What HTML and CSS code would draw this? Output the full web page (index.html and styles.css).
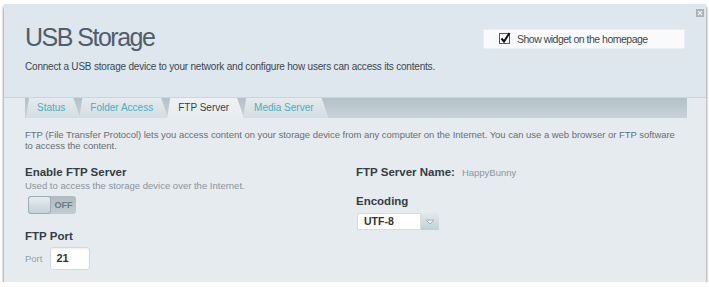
FILE: index.html
```html
<!DOCTYPE html>
<html lang="en">

<head>
    <meta charset="UTF-8">
    <meta name="viewport" content="width=device-width, initial-scale=1.0">
    <title>USB Storage</title>
    <link rel="stylesheet" href="styles.css">
</head>

<body>
    <div class="panel">
        <button class="close" title="Close">
            <svg width="8" height="8" viewBox="0 0 8 8">
                <rect width="8" height="8" fill="#a9b2b8"/>
                <path d="M2 2 L6 6 M6 2 L2 6" stroke="#eef2f4" stroke-width="1.3"/>
            </svg>
        </button>

        <div class="header">
            <div>
                <h1>USB Storage</h1>
                <p class="intro">Connect a USB storage device to your network and configure how users can access its contents.</p>
            </div>
            <label class="widget-option">
                <svg class="check" width="12" height="12" viewBox="0 0 12 12">
                    <rect x="0.5" y="1.5" width="10" height="10" fill="#fff" stroke="#555b60"/>
                    <path d="M2.5 6.5 L5 9.5 L10.5 1" fill="none" stroke="#111" stroke-width="2"/>
                </svg>
                Show widget on the homepage
            </label>
        </div>

        <div class="content">
            <div class="tabs">
                <a class="tab">Status</a>
                <a class="tab">Folder Access</a>
                <a class="tab active">FTP Server</a>
                <a class="tab">Media Server</a>
            </div>

            <p class="desc">FTP (File Transfer Protocol) lets you access content on your storage device from any computer on the Internet. You can use a web browser or FTP software to access the content.</p>

            <div class="columns">
                <div class="col">
                    <h3>Enable FTP Server</h3>
                    <p class="hint">Used to access the storage device over the Internet.</p>
                    <div class="toggle">
                        <span class="knob"></span>
                        <span class="toggle-label">OFF</span>
                    </div>

                    <h3 class="port-title">FTP Port</h3>
                    <div class="port-row">
                        <span class="field-label">Port</span>
                        <span class="text-box">21</span>
                    </div>
                </div>

                <div class="col">
                    <div class="name-row">
                        <h3>FTP Server Name:</h3>
                        <span class="value">HappyBunny</span>
                    </div>

                    <h3 class="encoding-title">Encoding</h3>
                    <div class="select">
                        <span class="select-value">UTF-8</span>
                        <span class="select-button">
                            <svg width="10" height="6" viewBox="0 0 10 6">
                                <path d="M1 1 L5 5 L9 1 Z" fill="#eef3f5" stroke="#9fb2bb"/>
                            </svg>
                        </span>
                    </div>
                </div>
            </div>
        </div>
    </div>
</body>

</html>
```

FILE: styles.css
```css
body {
    margin: 0;
    background-color: #fff;
    font-family: "Liberation Sans", Arial, sans-serif;
}

.panel {
    position: relative;
    width: 702px;
    height: 278px;
    margin: 4px 0 0 4px;
    background-color: #e6ebef;
    box-shadow: 0 3px 3px rgba(0, 0, 0, 0.65);
}

.close {
    position: absolute;
    top: 5px;
    right: 2px;
    padding: 0;
    border: none;
    background: none;
    line-height: 0;
    cursor: pointer;
}

.header {
    display: flex;
    justify-content: space-between;
    height: 72px;
    padding: 21px 21px 0 21px;
    background-color: #dee6ee;
    border-bottom: 1px solid #cbd5db;
}

h1 {
    margin: 0;
    font-size: 25px;
    line-height: 25px;
    font-weight: normal;
    color: #4f5e69;
    letter-spacing: -1.5px;
}

.intro {
    margin: 11px 0 0;
    font-size: 10px;
    line-height: 12px;
    color: #3b464f;
    letter-spacing: -0.2px;
}

.widget-option {
    display: flex;
    align-items: center;
    gap: 6px;
    box-sizing: border-box;
    width: 202px;
    height: 20px;
    margin-top: 4px;
    padding-left: 15px;
    background-color: #f8fafb;
    border: 1px solid #e9eef2;
    font-size: 10.5px;
    color: #3f474d;
    letter-spacing: -0.5px;
}

.check {
    margin-top: -2px;
}

.content {
    padding: 0 19px 0 21px;
}

.tabs {
    display: flex;
    height: 20px;
    background: linear-gradient(#b3c1c8, #c8d3d8);
    padding-left: 1px;
}

.tab {
    padding: 0 15px 0 11px;
    margin-right: -1px;
    font-size: 10px;
    line-height: 20px;
    color: #45afc6;
    background: linear-gradient(#e5ebee, #d4dde2);
    clip-path: polygon(3px 0, calc(100% - 7px) 0, 100% 100%, 0 100%);
    cursor: pointer;
}

.tab.active {
    color: #3a3f43;
    background: linear-gradient(#eef2f4, #e8ecef);
}

.desc {
    margin: 11px 8px 0 0;
    font-size: 9.5px;
    line-height: 11px;
    color: #666f75;
    letter-spacing: -0.03px;
}

.columns {
    display: grid;
    grid-template-columns: 1fr 1fr;
    margin-top: 14px;
}

h3 {
    margin: 0;
    font-size: 11.5px;
    line-height: 14px;
    font-weight: bold;
    color: #343d44;
}

.hint {
    margin: 1px 0 0;
    font-size: 9.5px;
    line-height: 12px;
    color: #8a949a;
}

.toggle {
    display: flex;
    width: 48px;
    height: 18px;
    margin: 4px 0 0 3px;
    border-radius: 3px;
    background: linear-gradient(#b0bbc1, #c2ccd1);
}

.knob {
    box-sizing: border-box;
    width: 23px;
    height: 18px;
    border: 1px solid #9badb5;
    border-radius: 3px;
    background: linear-gradient(#e6edf0, #c3d1d6);
}

.toggle-label {
    flex: 1;
    text-align: center;
    font-size: 9px;
    line-height: 18px;
    font-weight: bold;
    color: #6c7981;
}

.port-title {
    margin-top: 15px;
}

.port-row {
    display: flex;
    align-items: center;
    gap: 8px;
    margin-top: 4px;
}

.field-label {
    font-size: 9.5px;
    color: #979fa5;
}

.text-box {
    box-sizing: border-box;
    width: 40px;
    height: 23px;
    padding-left: 5px;
    background-color: #fff;
    border: 1px solid #d3dadf;
    border-radius: 3px;
    box-shadow: inset 0 1px 2px rgba(0, 0, 0, 0.08);
    font-size: 11px;
    line-height: 21px;
    font-weight: bold;
    color: #333;
}

.name-row {
    display: flex;
    align-items: baseline;
    gap: 7px;
}

.value {
    font-size: 9.5px;
    color: #8c959b;
}

.encoding-title {
    margin-top: 15px;
}

.select {
    display: flex;
    width: 82px;
    height: 17px;
    margin: 5px 0 0 1px;
}

.select-value {
    box-sizing: border-box;
    flex: 1;
    padding-left: 6px;
    background-color: #fff;
    border: 1px solid #d6dde1;
    font-size: 10.5px;
    line-height: 15px;
    font-weight: bold;
    color: #333;
}

.select-button {
    display: flex;
    align-items: center;
    justify-content: center;
    width: 18px;
    background: linear-gradient(#e2e9ec, #c4d0d6);
}
```
